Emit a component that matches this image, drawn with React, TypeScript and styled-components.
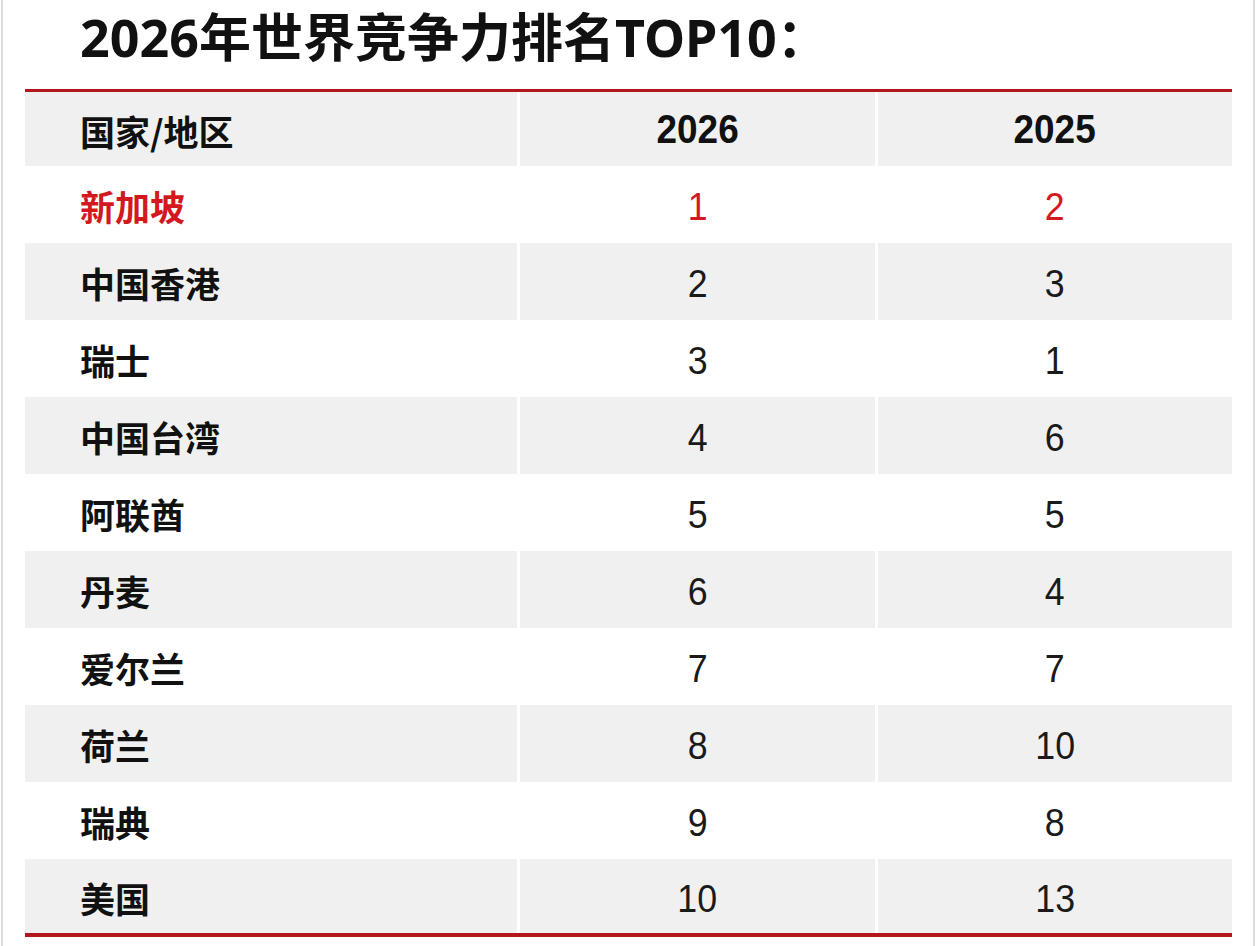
import React from "react";
import styled, { createGlobalStyle } from "styled-components";

const Global = createGlobalStyle`
  html, body { margin: 0; padding: 0; background: #ffffff; }
  body { font-family: "Liberation Sans", "Noto Sans CJK SC", sans-serif; }
`;

const Frame = styled.div`
  box-sizing: border-box;
  margin-left: 1px;
  width: 1254px;
  height: 946px;
  border-left: 2px solid #dcdcdc;
  border-right: 2px solid #dcdcdc;
  padding: 0 22px 0 22px;
  display: flex;
  flex-direction: column;
`;

const Title = styled.h1`
  margin: 0;
  padding: 1px 0 0 55px;
  height: 89px;
  box-sizing: border-box;
  font-family: "Noto Sans", "Noto Sans CJK SC", sans-serif;
  font-weight: 700;
  font-size: 52px;
  line-height: 72px;
  color: #111;
  letter-spacing: 0px;
`;

const Table = styled.div`
  border-top: 3px solid #b3161d;
  border-bottom: 4px solid #b3161d;
  width: 1207px;
  display: flex;
  flex-direction: column;
`;

const Row = styled.div<{ $shade: boolean; $h: number }>`
  display: grid;
  grid-template-columns: 492px 355px 354px;
  column-gap: 3px;
  height: ${(p) => p.$h}px;
  background: #ffffff;
  & > div {
    background: ${(p) => (p.$shade ? "#f0f0f0" : "#ffffff")};
  }
`;

const NameCell = styled.div<{ $red?: boolean }>`
  display: flex;
  align-items: center;
  padding: 2px 0 0 55px;
  font-family: "Noto Sans CJK SC", sans-serif;
  font-weight: 700;
  font-size: 35px;
  color: ${(p) => (p.$red ? "#d2191f" : "#111")};
`;

const NumCell = styled.div<{ $red?: boolean; $bold?: boolean }>`
  display: flex;
  align-items: center;
  justify-content: center;
  padding-top: ${(p) => (p.$bold ? "0" : "6px")};
  font-family: "Liberation Sans", Arial, sans-serif;
  font-weight: ${(p) => (p.$bold ? 700 : 400)};
  font-size: ${(p) => (p.$bold ? "41px" : "38px")};
  color: ${(p) => (p.$red ? "#d2191f" : p.$bold ? "#111" : "#1a1a1a")};
`;

const Num = styled.span<{ $bold?: boolean }>`
  display: inline-block;
  transform: ${(p) => (p.$bold ? "scaleX(0.9)" : "scaleX(0.94)")};
`;

const rows: [string, string, string][] = [
  ["新加坡", "1", "2"],
  ["中国香港", "2", "3"],
  ["瑞士", "3", "1"],
  ["中国台湾", "4", "6"],
  ["阿联酋", "5", "5"],
  ["丹麦", "6", "4"],
  ["爱尔兰", "7", "7"],
  ["荷兰", "8", "10"],
  ["瑞典", "9", "8"],
  ["美国", "10", "13"],
];

export default function App() {
  return (
    <>
      <Global />
      <Frame>
        <Title>2026年世界竞争力排名TOP10：</Title>
        <Table>
          <Row $shade={true} $h={74}>
            <NameCell>国家/地区</NameCell>
            <NumCell $bold><Num $bold>2026</Num></NumCell>
            <NumCell $bold><Num $bold>2025</Num></NumCell>
          </Row>
          {rows.map(([name, a, b], i) => (
            <Row key={name} $shade={i % 2 === 1} $h={i === 9 ? 74 : 77}>
              <NameCell $red={i === 0}>{name}</NameCell>
              <NumCell $red={i === 0}><Num>{a}</Num></NumCell>
              <NumCell $red={i === 0}><Num>{b}</Num></NumCell>
            </Row>
          ))}
        </Table>
      </Frame>
    </>
  );
}
